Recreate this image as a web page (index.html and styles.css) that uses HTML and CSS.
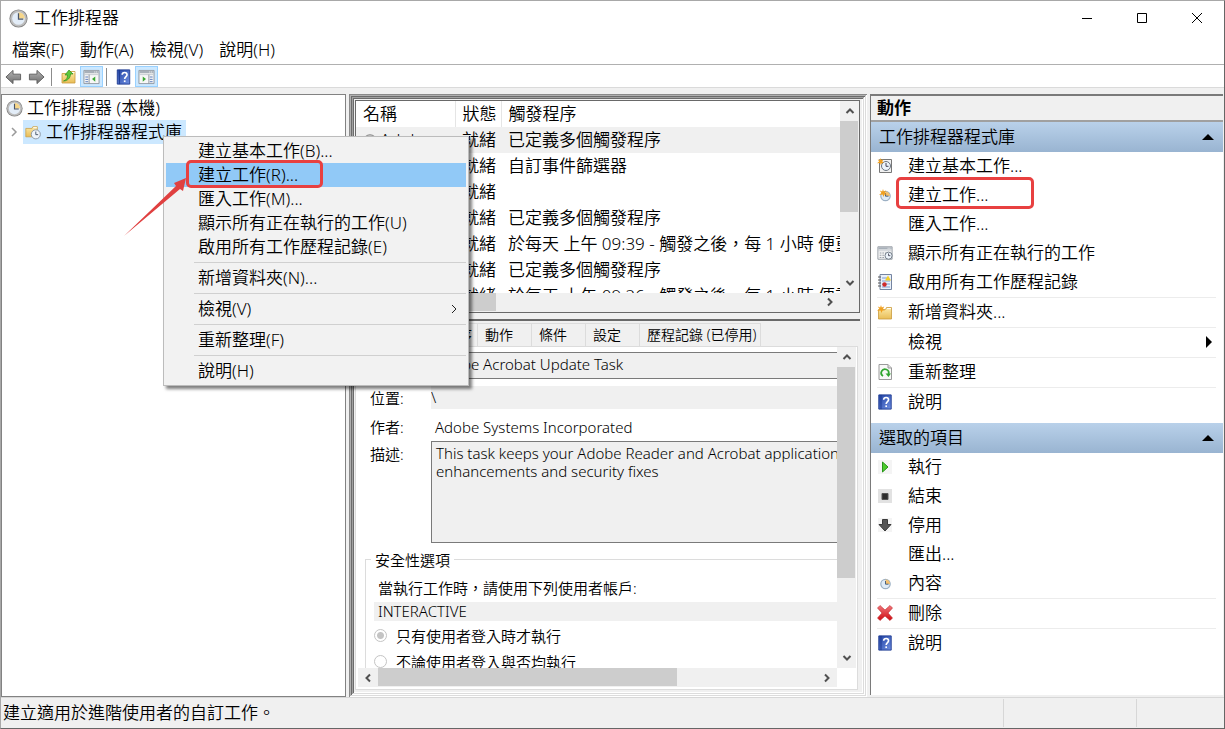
FILE: index.html
```html
<!DOCTYPE html>
<html lang="zh-Hant-TW">
<head>
  <meta charset="UTF-8" />
  <title>工作排程器</title>
  <link rel="stylesheet" href="styles.css">
</head>
<body>

  <svg class="defs" aria-hidden="true">
    <defs>
      <linearGradient id="gFolder" x1="0" y1="0" x2="0" y2="1">
        <stop offset="0" stop-color="#fbe9a8" /><stop offset="1" stop-color="#e9bd55" />
      </linearGradient>
      <linearGradient id="gBlue" x1="0" y1="0" x2="1" y2="1">
        <stop offset="0" stop-color="#2344a5" /><stop offset="1" stop-color="#6f8fe0" />
      </linearGradient>
      <linearGradient id="gGray" x1="0" y1="0" x2="0" y2="1">
        <stop offset="0" stop-color="#b5b5b5" /><stop offset="1" stop-color="#6c6c6c" />
      </linearGradient>
      <linearGradient id="gRed" x1="0" y1="0" x2="0" y2="1">
        <stop offset="0" stop-color="#f0777b" /><stop offset="1" stop-color="#cf0a10" />
      </linearGradient>
      <symbol id="clock" viewBox="0 0 18 18">
        <circle cx="9" cy="9" r="8.600" fill="#858585" />
        <circle cx="9" cy="9" r="7.800" fill="#bdbdbd" />
        <circle cx="9" cy="9" r="6" fill="#e3edf8" />
        <path d="M9 9V3a6 6 0 0 1 6 6z" fill="#f6d68a" />
        <path d="M9 4v5.500h4.500" fill="none" stroke="#4a5568" stroke-width="1.200" />
      </symbol>
      <symbol id="miniClock" viewBox="0 0 16 16">
        <circle cx="8.500" cy="9" r="4.700" fill="#dfebf7" stroke="#9cb0c4" stroke-width="1.200" />
        <path d="M8.500 9V4.500A4.500 4.500 0 0 1 13 9z" fill="#f3c070" />
        <path d="M8.500 6v3.200h3" fill="none" stroke="#49617c" />
      </symbol>
      <symbol id="folder" viewBox="0 0 16 16">
        <path d="M1.500 4.500h7l1-2h5v11.500h-13z" fill="url(#gFolder)" stroke="#c99a3c" stroke-width=".8" />
        <path d="M10 3.600h4" stroke="#fff" />
      </symbol>
      <symbol id="star" viewBox="0 0 10 10">
        <path d="M5 0l1 3 3-1-1.500 3L10 7 7 7 5.500 10 4.500 7 0 7.500 3 5 1 2l3 1z" fill="#f0a020" />
      </symbol>
      <symbol id="help" viewBox="0 0 16 18">
        <path d="M1 1h14v16H1z" fill="url(#gBlue)" stroke="#1c3990" />
        <path d="M3.500 1v16" stroke="#1c3990" />
        <path d="M6.500 6.500C6.500 3 12 3 12 6.500c0 2-2.700 2.200-2.700 4.800" fill="none" stroke="#fff" stroke-width="1.800" />
        <path d="M8.400 12.800h1.900v1.900H8.400z" fill="#fff" />
      </symbol>
      <symbol id="arrow" viewBox="0 0 18 16">
        <path d="M1 8l7.500-7v4H16.500v6H8.500v4z" fill="url(#gGray)" stroke="#5d5d5d" />
      </symbol>
      <symbol id="window" viewBox="0 0 18 16">
        <path d="M1 1h16v14H1z" fill="#f7f7f7" stroke="#8f969e" />
        <path d="M1.500 1.500h15v2.500h-15z" fill="#a8b0b9" />
        <path d="M12 2.700h1m1 0h1" stroke="#fff" />
        <path d="M1 5.500h16" stroke="#c5cad0" />
      </symbol>
      <symbol id="chevron" viewBox="0 0 10 10">
        <path d="M1.500 7L5 3.500 8.500 7" fill="none" stroke="#505050" stroke-width="2" />
      </symbol>
    </defs>
  </svg>

  <div class="window">
    <header class="titlebar">
      <svg class="app-icon"><use href="#clock" /></svg>
      <h1>工作排程器</h1>
      <div class="caption-buttons">
        <button type="button" aria-label="最小化"><svg viewBox="0 0 12 12"><path d="M1 6.500h10" /></svg></button>
        <button type="button" aria-label="最大化"><svg viewBox="0 0 12 12"><path d="M1.500 1.500h9v9h-9z" /></svg></button>
        <button type="button" aria-label="關閉"><svg viewBox="0 0 12 12"><path d="M1 1l10 10M11 1L1 11" /></svg></button>
      </div>
    </header>

    <nav class="menubar">
      <button type="button">檔案(F)</button>
      <button type="button">動作(A)</button>
      <button type="button">檢視(V)</button>
      <button type="button">說明(H)</button>
    </nav>

    <div class="toolbar">
      <button type="button" aria-label="上一頁"><svg><use href="#arrow" /></svg></button>
      <button type="button" aria-label="下一頁"><svg class="flip"><use href="#arrow" /></svg></button>
      <span class="tool-sep"></span>
      <button type="button" aria-label="上一層">
        <svg viewBox="0 0 16 16"><use href="#folder" /><path d="M3 12c3-1 4-3 4-6H4.500l4-5 4 4H10c0 4-3 7-7 7z" fill="#5cc83b" stroke="#2f8f1c" stroke-width=".7" /></svg>
      </button>
      <button type="button" class="pressed" aria-label="主控台樹狀目錄">
        <svg viewBox="0 0 18 16"><use href="#window" /><path d="M6.500 5.500V15" stroke="#8f969e" /><path d="M2.500 8h3m-3 2.500h3m-3 2.500h3" stroke="#5577b8" /><path d="M13 7.500v5.500L9.500 10.200z" fill="#3aa832" /></svg>
      </button>
      <span class="tool-sep"></span>
      <button type="button" aria-label="說明"><svg><use href="#help" /></svg></button>
      <button type="button" class="pressed" aria-label="動作窗格">
        <svg viewBox="0 0 18 16"><use href="#window" /><path d="M11.500 5.500V15" stroke="#8f969e" /><path d="M12.500 8h3m-3 2.500h3m-3 2.500h3" stroke="#5577b8" /><path d="M5 7.500v5.500l3.500-2.800z" fill="#3aa832" /></svg>
      </button>
    </div>

    <main class="panes">
      <section class="tree">
        <div class="tree-row root">
          <svg><use href="#clock" /></svg>
          <span>工作排程器 (本機)</span>
        </div>
        <div class="tree-row child">
          <svg class="expander" viewBox="0 0 10 10"><path d="M3 1l4 4-4 4" fill="none" stroke="#9a9a9a" stroke-width="1.500" /></svg>
          <span class="tree-label">
            <svg viewBox="0 0 18 16"><use href="#folder" width="16" height="15" /><circle cx="12.500" cy="10.500" r="4.800" fill="#eef4fa" stroke="#8a97a5" /><path d="M12.500 7.500v3.300h2.500" fill="none" stroke="#46556a" /></svg>
            工作排程器程式庫
          </span>
        </div>
      </section>

      <section class="center">
        <div class="task-list">
          <div class="list-view">
            <table>
              <thead>
                <tr><th class="col-name">名稱</th><th class="col-status">狀態</th><th>觸發程序</th></tr>
              </thead>
              <tbody>
                <tr class="selected"><td><svg class="row-icon"><use href="#clock" /></svg>Adobe</td><td>就緒</td><td>已定義多個觸發程序</td></tr>
                <tr><td></td><td>就緒</td><td>自訂事件篩選器</td></tr>
                <tr><td></td><td>就緒</td><td></td></tr>
                <tr><td></td><td>就緒</td><td>已定義多個觸發程序</td></tr>
                <tr><td></td><td>就緒</td><td>於每天 上午 09:39 - 觸發之後，每 1 小時 便重</td></tr>
                <tr><td></td><td>就緒</td><td>已定義多個觸發程序</td></tr>
                <tr><td></td><td>就緒</td><td>於每天 上午 09:26 - 觸發之後，每 1 小時 便重</td></tr>
              </tbody>
            </table>
          </div>
          <div class="vscroll">
            <svg><use href="#chevron" /></svg>
            <div class="track"><div class="thumb thumb-list-v"></div></div>
            <svg class="down"><use href="#chevron" /></svg>
          </div>
          <div class="hscroll">
            <svg class="left"><use href="#chevron" /></svg>
            <div class="track"><div class="thumb thumb-list-h"></div></div>
            <svg class="right"><use href="#chevron" /></svg>
          </div>
        </div>

        <div class="details">
          <div class="tabs" role="tablist">
            <button type="button" role="tab" class="tab-general">一般</button>
            <button type="button" role="tab" class="tab-trigger">觸發程序</button>
            <button type="button" role="tab">動作</button>
            <button type="button" role="tab">條件</button>
            <button type="button" role="tab">設定</button>
            <button type="button" role="tab" class="tab-history">歷程記錄 (已停用)</button>
          </div>
          <div class="tab-page">
            <div class="form-view">
              <form>
                <div class="field">
                  <label for="taskName">名稱:</label>
                  <input type="text" id="taskName" class="boxed" value="Adobe Acrobat Update Task" readonly>
                </div>
                <div class="field">
                  <label for="location">位置:</label>
                  <input type="text" id="location" class="flat" value="\" readonly>
                </div>
                <div class="field">
                  <span class="label">作者:</span>
                  <span class="author">Adobe Systems Incorporated</span>
                </div>
                <div class="field field-text">
                  <label for="description">描述:</label>
                  <textarea id="description" readonly>This task keeps your Adobe Reader and Acrobat application
enhancements and security fixes</textarea>
                </div>
                <fieldset>
                  <legend>安全性選項</legend>
                  <label for="account" class="account-label">當執行工作時，請使用下列使用者帳戶:</label>
                  <input type="text" id="account" class="account" value="INTERACTIVE" readonly>
                  <label class="radio"><input type="radio" name="logon" checked disabled>只有使用者登入時才執行</label>
                  <label class="radio"><input type="radio" name="logon" disabled>不論使用者登入與否均執行</label>
                </fieldset>
              </form>
            </div>
            <div class="vscroll">
              <svg><use href="#chevron" /></svg>
              <div class="track"><div class="thumb thumb-form-v"></div></div>
              <svg class="down"><use href="#chevron" /></svg>
            </div>
            <div class="hscroll">
              <svg class="left"><use href="#chevron" /></svg>
              <div class="track"><div class="thumb thumb-form-h"></div></div>
              <svg class="right"><use href="#chevron" /></svg>
            </div>
          </div>
        </div>
      </section>

      <aside class="actions">
        <h2>動作</h2>
        <button type="button" class="section-head">工作排程器程式庫<i class="tri-up"></i></button>
        <ul>
          <li><button type="button">
            <svg viewBox="0 0 16 16"><path d="M2.500 1.500h12v13h-12z" fill="#f1f1f1" stroke="#777" /><circle cx="9" cy="8" r="4.500" fill="#edf4fb" stroke="#6a7480" /><path d="M9 5v3.300h2.500" fill="none" stroke="#445" /><use href="#star" width="7" height="7" /></svg>
            建立基本工作...</button></li>
          <li class="marked"><button type="button">
            <svg viewBox="0 0 16 16"><use href="#miniClock" /><use href="#star" x="2" y="2" width="8" height="8" /></svg>
            建立工作...</button></li>
          <li><button type="button"><svg></svg>匯入工作...</button></li>
          <li><button type="button">
            <svg viewBox="0 0 18 16"><use href="#window" /><path d="M3 8h7m-7 2.500h5m-5 2.500h5" stroke="#8a929c" stroke-dasharray="2 1" /><circle cx="13" cy="11" r="4" fill="#edf4fb" stroke="#6a7480" /><path d="M13 8.500V11h2" fill="none" stroke="#445" /></svg>
            顯示所有正在執行的工作</button></li>
          <li><button type="button">
            <svg viewBox="0 0 16 16"><path d="M3 .5h11.500v15H3z" fill="#e9f0fa" stroke="#7484a0" /><path d="M5 4h5M5 7h8m-8 3h8m-8 3h8" stroke="#7d9bd0" /><path d="M1 3h3M1 6h3M1 9h3m-3 3h3" stroke="#555" /><path d="M11 1.500l3 5H8z" fill="#f3cf28" /><circle cx="7.500" cy="10.500" r="2.200" fill="#cf2a2a" /></svg>
            啟用所有工作歷程記錄</button></li>
          <li class="divided"><button type="button">
            <svg viewBox="0 0 16 16"><use href="#folder" y="1" /><use href="#star" width="8" height="8" y="1" /></svg>
            新增資料夾...</button></li>
          <li class="divided"><button type="button"><svg></svg>檢視<i class="tri-right"></i></button></li>
          <li class="divided"><button type="button">
            <svg viewBox="0 0 16 16"><path d="M2 .5h9l3.500 3.500v11.500H2z" fill="#f8f8f8" stroke="#9a9a9a" /><path d="M11 .5V4h3.500" fill="#ddd" stroke="#9a9a9a" /><path d="M6 12a3.700 3.700 0 1 1 5.500-2" fill="none" stroke="#2fa52f" stroke-width="1.800" /><path d="M8.500 9.500h5.500l-2.500 3.500z" fill="#2fa52f" /></svg>
            重新整理</button></li>
          <li class="divided"><button type="button"><svg><use href="#help" /></svg>說明</button></li>
        </ul>
        <button type="button" class="section-head">選取的項目<i class="tri-up"></i></button>
        <ul>
          <li><button type="button"><svg viewBox="0 0 16 16"><path d="M1 1h14v14H1z" fill="#f4f4f4" /><path d="M5.500 3l5.500 5-5.500 5z" fill="#4ccb2c" stroke="#279417" /></svg>執行</button></li>
          <li><button type="button"><svg viewBox="0 0 16 16"><path d="M1 1h14v14H1z" fill="#e2e2e2" /><path d="M5 5.500h6v6H5z" fill="#2d2d2d" stroke="#555" /></svg>結束</button></li>
          <li><button type="button"><svg viewBox="0 0 16 16"><path d="M1 1h14v14H1z" fill="#f4f4f4" /><path d="M5.500 2.500h5v5h3.500l-6 6.500-6-6.500h3.500z" fill="#555" stroke="#3a3a3a" /></svg>停用</button></li>
          <li><button type="button"><svg></svg>匯出...</button></li>
          <li><button type="button"><svg><use href="#miniClock" /></svg>內容</button></li>
          <li class="divided"><button type="button"><svg viewBox="0 0 16 16"><path d="M3 .5l5 4.500 5-4.500L15.500 3 11 8l4.500 5-2.500 2.500L8 11l-5 4.500L.5 13 5 8 .5 3z" fill="url(#gRed)" stroke="#c0272c" stroke-width=".6" /></svg>刪除</button></li>
          <li class="divided"><button type="button"><svg><use href="#help" /></svg>說明</button></li>
        </ul>
      </aside>
    </main>

    <footer class="statusbar">
      <span class="status-text">建立適用於進階使用者的自訂工作。</span>
      <span class="status-cell"></span>
      <span class="status-cell last"></span>
    </footer>
  </div>

  <div class="context-menu" role="menu">
    <button type="button" role="menuitem">建立基本工作(B)...</button>
    <button type="button" role="menuitem" class="active">建立工作(R)...</button>
    <button type="button" role="menuitem">匯入工作(M)...</button>
    <button type="button" role="menuitem">顯示所有正在執行的工作(U)</button>
    <button type="button" role="menuitem">啟用所有工作歷程記錄(E)</button>
    <hr>
    <button type="button" role="menuitem">新增資料夾(N)...</button>
    <hr>
    <button type="button" role="menuitem">檢視(V)<svg viewBox="0 0 10 10"><path d="M3 1l4 4-4 4" fill="none" stroke="#222" /></svg></button>
    <hr>
    <button type="button" role="menuitem">重新整理(F)</button>
    <hr>
    <button type="button" role="menuitem">說明(H)</button>
  </div>

  <svg class="pointer" viewBox="0 0 64 60" aria-hidden="true">
    <path d="M0 59L52 9 50 6 62 1 59 14 56 12z" fill="#e04040" />
  </svg>

</body>
</html>
```

FILE: styles.css
```css
* {
  box-sizing: border-box;
}

body {
  margin: 0;
  font-family: "Noto Sans", "Noto Sans CJK TC", sans-serif;
  font-size: 17px;
  font-weight: 350;
  line-height: 24px;
  color: #000;
  position: relative;
}

button, input, textarea {
  font: inherit;
  color: inherit;
  border: none;
  border-radius: 0;
  margin: 0;
  padding: 0;
  background: none;
}

svg {
  flex: none;
  display: block;
}

.defs {
  position: absolute;
  width: 0;
  height: 0;
}

.window {
  height: 100vh;
  display: flex;
  flex-direction: column;
  background: #fff;
  border: 1px solid #a8a8a8;
  border-right-color: #666;
  border-bottom-color: #666;
  overflow: hidden;
}

/* title, menu and tool bars */
.titlebar {
  display: flex;
  align-items: center;
  height: 34px;
  padding-left: 8px;
  gap: 6px;
}

.app-icon {
  width: 19px;
  height: 19px;
}

.titlebar h1 {
  flex: 1;
  margin: 0;
  font-size: 17px;
  font-weight: inherit;
}

.caption-buttons {
  display: flex;
}

.caption-buttons button {
  width: 55px;
  height: 34px;
  display: flex;
  align-items: center;
  justify-content: center;
}

.caption-buttons svg {
  width: 12px;
  height: 12px;
  fill: none;
  stroke: #000;
}

.menubar {
  display: flex;
  align-items: center;
  height: 30px;
  padding-left: 11px;
  gap: 16px;
  border-bottom: 1px solid #b0b0b0;
}

.toolbar {
  display: flex;
  align-items: center;
  height: 23px;
  padding: 1px 0 0 1px;
  border-bottom: 1px solid #dadada;
}

.toolbar button {
  width: 23px;
  height: 21px;
  display: flex;
  align-items: center;
  justify-content: center;
}

.toolbar svg {
  width: 17px;
  height: 16px;
}

.toolbar .pressed {
  background: #cce8ff;
  border: 1px solid #99d1ff;
}

.flip {
  transform: scaleX(-1);
}

.tool-sep {
  width: 1px;
  height: 18px;
  margin: 0 5px 0 3px;
  background: #8c8c8c;
}

/* panes */
.panes {
  flex: 1;
  min-height: 0;
  display: grid;
  grid-template: minmax(0, 1fr) / 345px minmax(0, 1fr) 354px;
  column-gap: 3px;
  padding-top: 6px;
  background: #f0f0f0;
}

.tree {
  padding-top: 1px;
  background: #fff;
  border: 1px solid #828282;
}

.tree-row {
  display: flex;
  align-items: center;
  height: 24px;
}

.root {
  gap: 4px;
  padding-left: 4px;
}

.root svg {
  width: 17px;
  height: 17px;
}

.child {
  gap: 4px;
  padding-left: 7px;
}

.expander {
  width: 10px;
  height: 10px;
}

.tree-label {
  display: flex;
  align-items: center;
  gap: 5px;
  padding: 0 4px 0 1px;
  background: #cce8ff;
}

.tree-label svg {
  width: 17px;
  height: 16px;
}

.center {
  min-height: 0;
  display: flex;
  flex-direction: column;
  gap: 6px;
  padding: 6px 7px 6px 6px;
  background: #f0f0f0;
  box-shadow:
    inset 1px 1px #8a8a8a, inset -1px -1px #fff,
    inset 2px 2px #b0b0b0, inset -2px -2px #dcdcdc,
    inset 3px 3px #6c6c6c, inset -3px -3px #fff,
    inset 4px 4px #a0a0a0, inset -4px -4px #dcdcdc,
    inset 5px 5px #6c6c6c, inset -5px -5px #fff;
}

.task-list {
  flex: 213 1 0;
  min-height: 0;
  display: grid;
  grid-template: minmax(0, 1fr) 19px / minmax(0, 1fr) 19px;
  border: 1px solid #696969;
  background: #f0f0f0;
}

.list-view {
  overflow: hidden;
  background: #fff;
}

table {
  table-layout: fixed;
  width: 100%;
  border-collapse: collapse;
}

th, td {
  height: 26px;
  padding: 0 0 0 7px;
  text-align: left;
  font-weight: inherit;
  white-space: nowrap;
  overflow: hidden;
}

th {
  border-right: 1px solid #e5e5e5;
}

th:last-child {
  border-right: none;
}

.col-name {
  width: 99px;
}

.col-status {
  width: 46px;
}

.selected {
  background: #f0f0f0;
}

.row-icon {
  display: inline-block;
  width: 14px;
  height: 14px;
  margin-right: 3px;
  vertical-align: -2px;
}

/* scrollbars */
.vscroll, .hscroll {
  display: flex;
  align-items: center;
  background: #f0f0f0;
}

.vscroll {
  flex-direction: column;
}

.hscroll svg, .vscroll svg {
  width: 10px;
  height: 10px;
  margin: 5px;
}

.vscroll .track {
  flex: 1;
  width: 100%;
  padding-right: 1px;
}

.hscroll .track {
  flex: 1;
  height: 100%;
  padding-bottom: 1px;
}

.thumb {
  background: #cdcdcd;
}

.thumb-list-v {
  height: 60%;
}

.thumb-list-h {
  width: 27%;
  height: 100%;
}

.thumb-form-v {
  height: 75%;
}

.thumb-form-h {
  width: 68%;
  height: 100%;
}

.down {
  transform: rotate(180deg);
}

.left {
  transform: rotate(-90deg);
}

.right {
  transform: rotate(90deg);
}

/* task details */
.details {
  flex: 371 1 0;
  min-height: 0;
  display: flex;
  flex-direction: column;
  padding: 2px 0 1px;
  border-top: 2px solid #696969;
  font-size: 15px;
}

.tabs {
  display: flex;
  height: 23px;
  font-size: 14px;
}

.tabs button {
  width: 54px;
  padding-left: 7px;
  border: 1px solid #dcdcdc;
  border-width: 1px 1px 0 0;
  text-align: left;
  white-space: nowrap;
  line-height: 20px;
}

.tabs .tab-general {
  width: 51px;
  background: #fff;
}

.tabs .tab-trigger {
  width: 72px;
  padding-left: 10px;
}

.tabs .tab-history {
  width: auto;
  padding-right: 4px;
}

.tab-page {
  flex: 1;
  min-height: 0;
  display: grid;
  grid-template: minmax(0, 1fr) 19px / minmax(0, 1fr) 19px;
  margin-right: 2px;
  padding: 0 1px 2px 2px;
  border: 1px solid #dcdcdc;
  background: #fff;
}

.form-view {
  overflow: hidden;
}

form {
  width: 115%;
  padding: 5px 0 0 7px;
}

.field {
  display: grid;
  grid-template-columns: 61px 1fr;
  padding-left: 5px;
}

.field label, .label, .author {
  line-height: 24px;
}

.boxed {
  height: 27px;
  margin-bottom: 7px;
  padding: 0 3px 2px;
  border: 1px solid #7a7a7a;
  background: #f0f0f0;
}

.flat {
  height: 23px;
  margin-bottom: 6px;
  background: #f0f0f0;
}

.author {
  padding-left: 4px;
}

.field-text label {
  padding-top: 3px;
}

textarea {
  display: block;
  height: 102px;
  margin: 2px 0 7px;
  padding: 2px 4px;
  border: 1px solid #7a7a7a;
  background: #f0f0f0;
  line-height: 18px;
  resize: none;
  overflow: hidden;
  white-space: pre;
}

fieldset {
  display: flex;
  flex-direction: column;
  margin: 0;
  padding: 7px 0 0 8px;
  border: 1px solid #dcdcdc;
}

legend {
  padding: 0 4px;
  margin-left: -3px;
  line-height: 20px;
}

.account-label {
  padding-left: 4px;
  line-height: 23px;
}

.account {
  height: 19px;
  margin: 2px 0;
  padding-left: 4px;
  background: #f0f0f0;
}

.radio {
  display: flex;
  align-items: center;
  gap: 9px;
  height: 26px;
}

.radio input {
  appearance: none;
  flex: none;
  width: 13px;
  height: 13px;
  border: 1px solid #c4c4c4;
  border-radius: 50%;
}

.radio input:checked {
  background: radial-gradient(#c4c4c4 3px, #fff 4px);
}

/* actions pane */
.actions {
  margin: 0 1px 2px 0;
  border: 2px solid #7a7a7a;
  border-width: 2px 0 0 1px;
  background: #fff;
}

.actions h2 {
  margin: 0;
  padding-left: 6px;
  height: 26px;
  font-size: 17px;
  font-weight: 700;
  border-bottom: 2px solid #a0a0a0;
  background: #f0f0f0;
}

.section-head {
  display: flex;
  align-items: center;
  justify-content: space-between;
  width: 100%;
  height: 30px;
  padding: 0 9px 0 8px;
  background: linear-gradient(#b9d1ea, #99b4d1);
}

.tri-up {
  border: 6px solid transparent;
  border-top: none;
  border-bottom-color: #000;
}

.tri-right {
  margin-left: auto;
  border: 6px solid transparent;
  border-right: none;
  border-left-color: #000;
}

.actions ul {
  list-style: none;
  margin: 0 7px 6px 6px;
  padding: 0;
}

.actions li {
  position: relative;
}

.actions li button {
  display: flex;
  align-items: center;
  gap: 15px;
  width: 100%;
  height: 29px;
  padding: 0 4px 2px 0;
}

.actions li svg {
  width: 16px;
  height: 16px;
}

.divided {
  border-top: 1px solid #ececec;
}

/* red frames round the highlighted commands */
.marked::after, .active::after {
  content: "";
  box-sizing: border-box;
  position: absolute;
  border: 3px solid #e84040;
  border-radius: 5px;
}

.marked::after {
  left: 19px;
  top: -4px;
  width: 138px;
  height: 32px;
}

/* status bar */
.statusbar {
  display: flex;
  height: 31px;
  align-items: center;
  padding-left: 2px;
  border-top: 1px solid #d7d7d7;
  background: #f0f0f0;
}

.status-text {
  flex: 1;
}

.status-cell {
  width: 133px;
  height: 28px;
  border-left: 1px solid #d7d7d7;
}

.last {
  width: 88px;
}

/* context menu over the tree and the list */
.context-menu {
  position: absolute;
  left: 163px;
  top: 136px;
  width: 306px;
  padding: 2px;
  border: 1px solid #bcbcbc;
  background: #f2f2f2;
  box-shadow: 3px 3px 3px rgba(0, 0, 0, 0.5);
}

.context-menu button {
  position: relative;
  display: flex;
  align-items: center;
  justify-content: space-between;
  width: 100%;
  height: 24px;
  padding: 0 7px 0 32px;
}

.context-menu svg {
  width: 10px;
  height: 10px;
}

.context-menu hr {
  margin: 3px 0 3px 28px;
  border: none;
  border-top: 1px solid #d0d0d0;
}

.context-menu .active {
  background: #91c9f7;
}

.active::after {
  left: 20px;
  top: -3px;
  width: 137px;
  height: 28px;
}

.pointer {
  position: absolute;
  left: 124px;
  top: 177px;
  width: 64px;
  height: 60px;
}
```
